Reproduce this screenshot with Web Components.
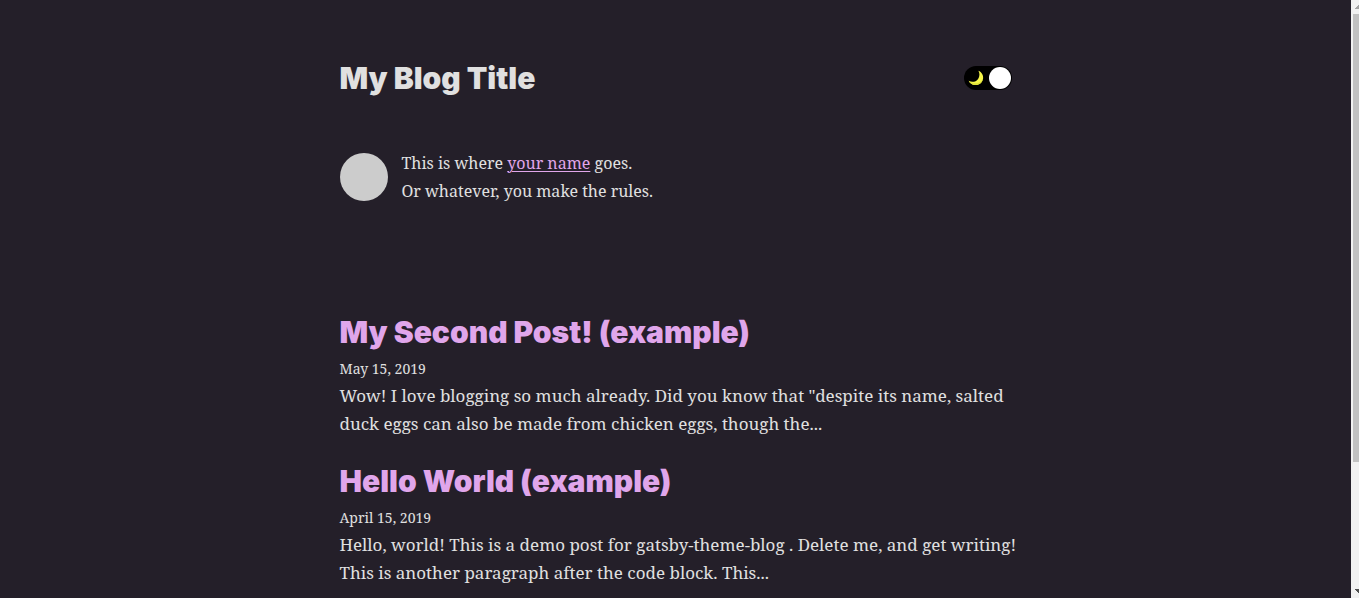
<!DOCTYPE html>
<html lang="en">
<head>
<meta charset="utf-8">
<meta name="viewport" content="width=device-width, initial-scale=1">
<title>My Blog Title</title>
<style>
  html {
    --bg: #241f29;
    --text: #e0e0e0;
    --accent: #e0a6eb;
    --heading-font: Inter, "Open Sans", sans-serif;
    --body-font: "Noto Serif", "DejaVu Serif", serif;
    background: var(--bg);
  }
  body {
    margin: 0;
    color: var(--text);
    font: 17px/28px var(--body-font);
  }
</style>
</head>
<body>
<blog-page>
  <blog-header slot="header">My Blog Title<theme-switch slot="action"></theme-switch></blog-header>
  <author-bio>
    <bio-link href="#author">your name</bio-link>
  </author-bio>
  <post-list>
    <blog-post heading="My Second Post! (example)" date="May 15, 2019" datetime="2019-05-15">Wow! I love blogging so much already. Did you know that "despite its name, salted<br>duck eggs can also be made from chicken eggs, though the...</blog-post>
    <blog-post heading="Hello World (example)" date="April 15, 2019" datetime="2019-04-15">Hello, world! This is a demo post for gatsby-theme-blog . Delete me, and get writing!<br>This is another paragraph after the code block. This...</blog-post>
  </post-list>
</blog-page>

<script>
const define = (name, html, setup) => customElements.define(name, class extends HTMLElement {
  constructor() {
    super();
    this.attachShadow({ mode: 'open' }).innerHTML = html;
  }
  connectedCallback() {
    if (setup) setup(this, this.shadowRoot);
  }
});

define('scroll-rail', `
  <style>
    :host { display: flex; flex-direction: column; width: 8px; height: 100vh; position: sticky; top: 0; background: #f1f1f1; overflow: hidden; flex: none; }
    svg { display: block; width: 8px; height: 14px; flex: none; }
    .track { flex: 1; padding-left: 2px; }
    .thumb { height: 78.6%; background: #c1c1c1; }
  </style>
  <svg viewBox="0 0 8 14" aria-hidden="true"><path d="M8 5V9H4V8H5V7H6V6H7V5Z" fill="#a3a3a3"/></svg>
  <div class="track"><div class="thumb"></div></div>
  <svg viewBox="0 0 8 14" aria-hidden="true"><path d="M4 5H8V9H7V8H6V7H5V6H4Z" fill="#505050"/></svg>`);

define('blog-page', `
  <style>
    :host { display: flex; align-items: flex-start; }
    .page { flex: 1; min-width: 0; }
    .column { max-width: 672px; margin: 0 auto; padding: 60px 20px 11px; }
  </style>
  <div class="page"><div class="column">
    <slot name="header"></slot>
    <main><slot></slot></main>
  </div></div>
  <scroll-rail></scroll-rail>`);

define('blog-header', `
  <style>
    :host { display: block; }
    header { display: flex; align-items: center; justify-content: space-between; }
    h1 { margin: 0; font: 900 30px/36px var(--heading-font); }
  </style>
  <header><h1><slot></slot></h1><slot name="action"></slot></header>`);

define('theme-switch', `
  <style>
    :host { display: block; }
    label { display: flex; align-items: center; justify-content: space-between; width: 48px; height: 24px; box-sizing: border-box; padding: 0 1px 0 4px; border-radius: 12px; background: #000; cursor: pointer; }
    svg { width: 16px; height: 16px; }
    input { appearance: none; width: 22px; height: 22px; margin: 0; border-radius: 50%; background: #fff; cursor: pointer; }
  </style>
  <label>
    <svg viewBox="0 0 16 16" aria-hidden="true">
      <path d="M10.4 .8C13.7 2.2 15.5 5.2 15.1 8.6C14.6 12.6 11.1 15.4 7.1 15.1C4.2 14.9 1.8 13.3 .7 10.8C4 12.6 8.1 11.8 10.1 8.9C11.8 6.4 11.9 3.3 10.4 .8Z" fill="#f6f64a"/>
      <path d="M15.1 8.6C14.6 12.6 11.1 15.4 7.1 15.1C4.2 14.9 1.8 13.3 .7 10.8C6 15.2 13.2 13.6 15.1 8.6Z" fill="#dfe23a"/>
    </svg>
    <input type="checkbox" role="switch" checked aria-label="Dark mode">
  </label>`);

define('bio-link', `
  <style>a { color: var(--accent); text-underline-offset: 2px; text-decoration-thickness: 1px; }</style>
  <a><slot></slot></a>`, (el, root) => {
  root.querySelector('a').href = el.getAttribute('href');
});

define('author-bio', `
  <style>
    :host { display: flex; align-items: center; gap: 14px; margin-top: 53px; font-size: 16px; white-space: nowrap; }
    .avatar { width: 48px; height: 48px; border-radius: 50%; background: #ccc; flex: none; }
    p { margin: 0; }
  </style>
  <div class="avatar"></div>
  <p>This is where <slot></slot> goes.<br>Or whatever, you make the rules.</p>`);

define('post-list', `
  <style>:host { display: grid; gap: 25px; margin-top: 109px; }</style>
  <slot></slot>`);

define('blog-post', `
  <style>
    :host { display: block; }
    h2 { margin: 0 0 6px; font: 900 30px/36px var(--heading-font); }
    a { color: var(--accent); text-decoration: none; }
    time { display: block; font-size: 14px; line-height: 26px; }
    p { margin: 0; }
    @media (min-width: 720px) { p { white-space: nowrap; } }
  </style>
  <article>
    <h2><a></a></h2>
    <time></time>
    <p><slot></slot></p>
  </article>`, (el, root) => {
  const link = root.querySelector('a');
  const time = root.querySelector('time');
  link.textContent = el.getAttribute('heading');
  link.href = '#' + el.getAttribute('datetime');
  time.textContent = el.getAttribute('date');
  time.dateTime = el.getAttribute('datetime');
});
</script>
</body>
</html>
